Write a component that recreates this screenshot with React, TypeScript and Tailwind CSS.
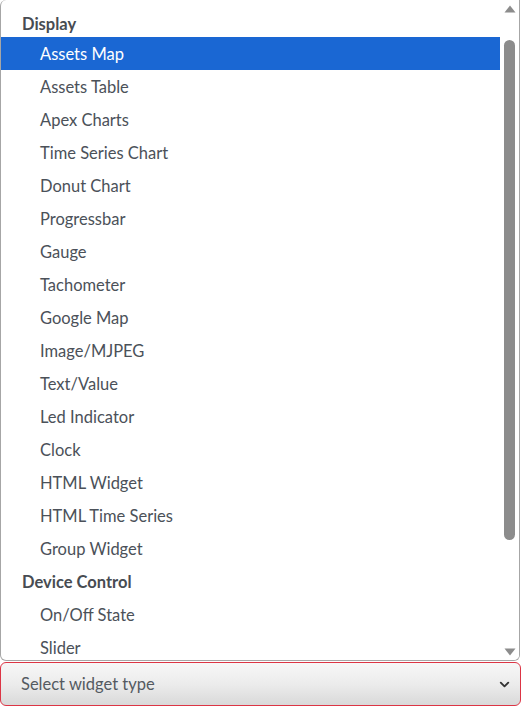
import { ChevronDown } from 'lucide-react';

const groups: { label: string | null; items: string[] }[] = [
    { label: null, items: ['Select widget type'] },
    {
        label: 'Display',
        items: [
            'Assets Map',
            'Assets Table',
            'Apex Charts',
            'Time Series Chart',
            'Donut Chart',
            'Progressbar',
            'Gauge',
            'Tachometer',
            'Google Map',
            'Image/MJPEG',
            'Text/Value',
            'Led Indicator',
            'Clock',
            'HTML Widget',
            'HTML Time Series',
            'Group Widget',
        ],
    },
    { label: 'Device Control', items: ['On/Off State', 'Slider'] },
];

function Scrollbar() {
    return (
        <div className="w-[19px] shrink-0 flex flex-col items-center bg-white">
            {/* up arrow */}
            <div className="h-[17px] flex items-center justify-center">
                <svg width="12" height="8" viewBox="0 0 12 8">
                    <polygon points="6,0.5 11.5,7.5 0.5,7.5" fill="#8c8c8c" />
                </svg>
            </div>
            <div className="flex-1 w-full flex flex-col items-center pt-[23px]">
                <div className="w-[11px] h-[500px] rounded-full bg-[#8c8c8c]" />
            </div>
            {/* down arrow */}
            <div className="h-[17px] flex items-center justify-center">
                <svg width="12" height="8" viewBox="0 0 12 8">
                    <polygon points="0.5,0.5 11.5,0.5 6,7.5" fill="#8c8c8c" />
                </svg>
            </div>
        </div>
    );
}

export default function App() {
    return (
        <div className="w-[522px] h-[707px] bg-white overflow-hidden font-['Lato','Liberation_Sans',sans-serif] text-[16.5px]">
            {/* Open listbox */}
            <div className="w-[520px] h-[661px] flex border border-t-0 border-[#a6a6a6] rounded-b-[6px] rounded-tl-[6px] overflow-hidden">
                <div className="flex-1 overflow-hidden">
                    <div className="mt-[-29px]">
                        {groups.map((g, gi) => (
                            <div key={gi}>
                                {g.label && (
                                    <div className={`h-[33px] flex items-center pl-[21px] font-bold text-[#474c52] ${gi === 1 ? 'pt-[8px]' : 'pt-px'}`}>
                                        {g.label}
                                    </div>
                                )}
                                {g.items.map(item => {
                                    const active = item === 'Assets Map';
                                    return (
                                        <div
                                            key={item}
                                            className={`h-[33px] flex items-center pt-[2px] whitespace-nowrap ${g.label ? 'pl-[39px]' : 'pl-[21px]'} ${active ? 'bg-[#1a67d3] text-white' : 'text-[#4b5159]'}`}
                                        >
                                            {item}
                                        </div>
                                    );
                                })}
                            </div>
                        ))}
                    </div>
                </div>
                <Scrollbar />
            </div>

            {/* Select control */}
            <div className="mt-px w-[521px] h-[44px] flex items-center justify-between pl-[20px] pr-[8px] rounded-[6px] border border-[#dc3545] bg-gradient-to-b from-[#f7f7f7] via-[#ececec] to-[#d9d9d9] text-[#545a61]">
                <span>Select widget type</span>
                <ChevronDown size={15} strokeWidth={3} className="text-[#333]" />
            </div>
        </div>
    );
}
